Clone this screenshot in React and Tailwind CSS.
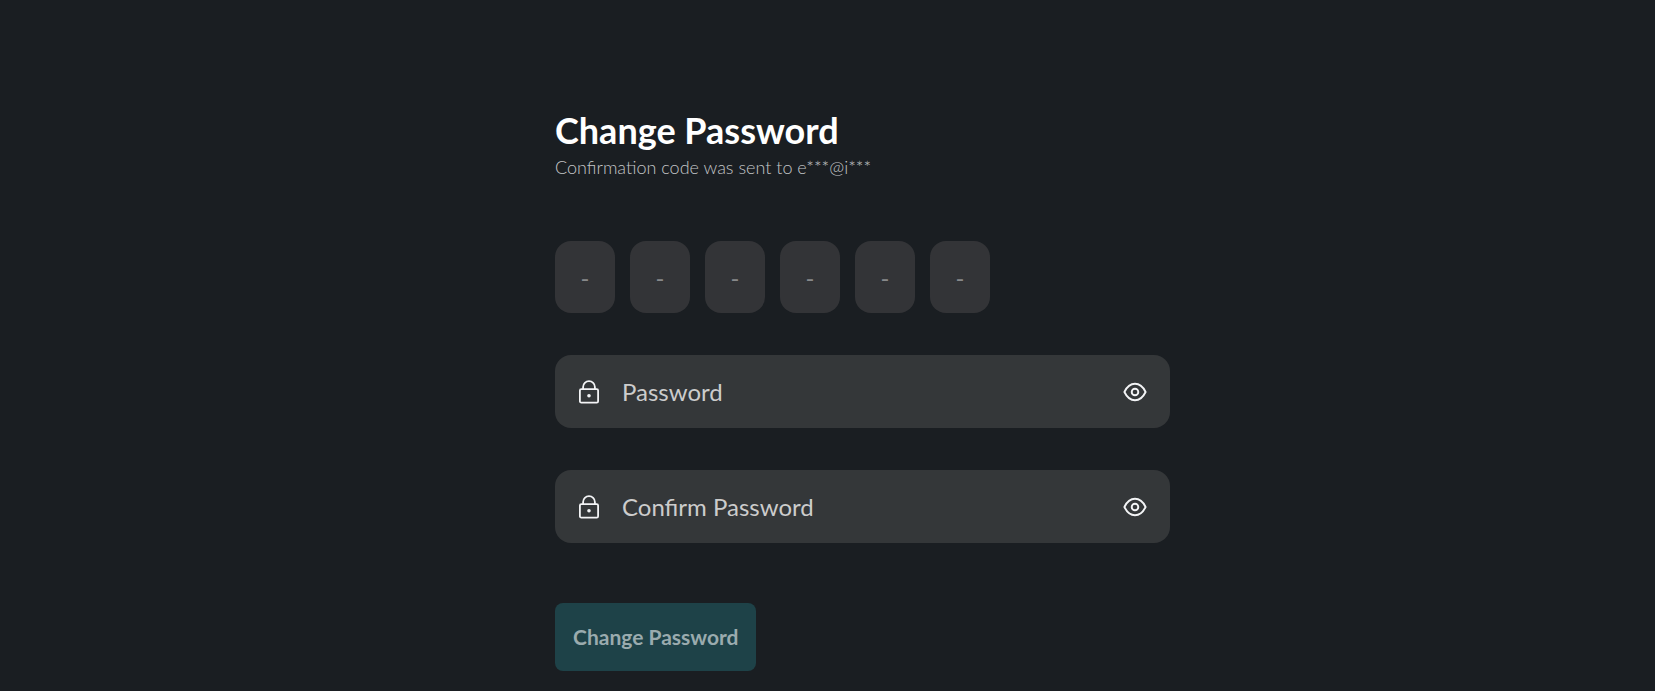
import { useState } from 'react'

const CODE_LENGTH = 6

function LockIcon() {
  return (
    <svg className="w-6 h-6 shrink-0" viewBox="0 0 24 24" fill="none" stroke="currentColor" strokeWidth={1.8} aria-hidden="true">
      <rect x="2.9" y="9.2" width="18.2" height="13.4" rx="1.4" />
      <path d="M6.1 9.2V7.1a5.9 5.9 0 0 1 11.8 0v2.1" />
      <circle cx="12" cy="15.8" r="1.8" fill="currentColor" stroke="none" />
    </svg>
  )
}

function EyeIcon() {
  return (
    <svg className="w-6 h-6" viewBox="0 0 24 24" fill="none" stroke="currentColor" strokeWidth={1.9} strokeLinejoin="round" aria-hidden="true">
      <path d="M1.4 12C4 6.6 7.6 3.8 12 3.8S20 6.6 22.6 12C20 17.4 16.4 20.2 12 20.2S4 17.4 1.4 12Z" />
      <circle cx="12" cy="12" r="3.3" />
    </svg>
  )
}

function PasswordField({ id, label, value, onChange }) {
  const [visible, setVisible] = useState(false)

  return (
    <div className="flex items-center h-[73px] pl-[22px] pr-[23px] rounded-2xl bg-[#343739] text-gray-100">
      <LockIcon />
      <input
        id={id}
        type={visible ? 'text' : 'password'}
        aria-label={label}
        placeholder={label}
        value={value}
        onChange={(e) => onChange(e.target.value)}
        className="flex-1 min-w-0 px-[21px] text-2xl bg-transparent outline-none placeholder:text-[#cccccc]"
      />
      <button type="button" aria-label={`Show ${label}`} onClick={() => setVisible(!visible)}>
        <EyeIcon />
      </button>
    </div>
  )
}

export default function App() {
  const [code, setCode] = useState(Array(CODE_LENGTH).fill(''))
  const [password, setPassword] = useState('')
  const [confirm, setConfirm] = useState('')

  const handleCodeChange = (index, value) => {
    setCode(code.map((digit, i) => (i === index ? value : digit)))
  }

  return (
    <main className="min-h-screen bg-[#1a1e22] font-['Lato',sans-serif] pt-[108px] pb-5">
      <form onSubmit={(e) => e.preventDefault()} className="max-w-[685px] mx-auto pl-[70px]">
        <h1 className="text-4xl leading-[44px] font-bold text-white">Change Password</h1>
        <p className="text-lg leading-[30px] font-light text-[#c4c6c8]">Confirmation code was sent to e***@i***</p>

        {/* Confirmation code */}
        <div className="flex gap-[15px] mt-[59px]">
          {code.map((digit, index) => (
            <input
              key={index}
              type="text"
              inputMode="numeric"
              maxLength={1}
              aria-label={`Digit ${index + 1}`}
              placeholder="-"
              value={digit}
              onChange={(e) => handleCodeChange(index, e.target.value)}
              className="w-[60px] h-[72px] rounded-2xl bg-[#333437] text-center text-2xl text-white outline-none placeholder:text-[#88898b]"
            />
          ))}
        </div>

        <div className="flex flex-col gap-[42px] mt-[42px]">
          <PasswordField id="password" label="Password" value={password} onChange={setPassword} />
          <PasswordField id="confirm-password" label="Confirm Password" value={confirm} onChange={setConfirm} />
        </div>

        <button
          type="submit"
          className="mt-[60px] h-[68px] px-[18px] rounded-lg bg-[#1e4248] text-[21px] font-bold text-[#9aabae]"
        >
          Change Password
        </button>
      </form>
    </main>
  )
}
